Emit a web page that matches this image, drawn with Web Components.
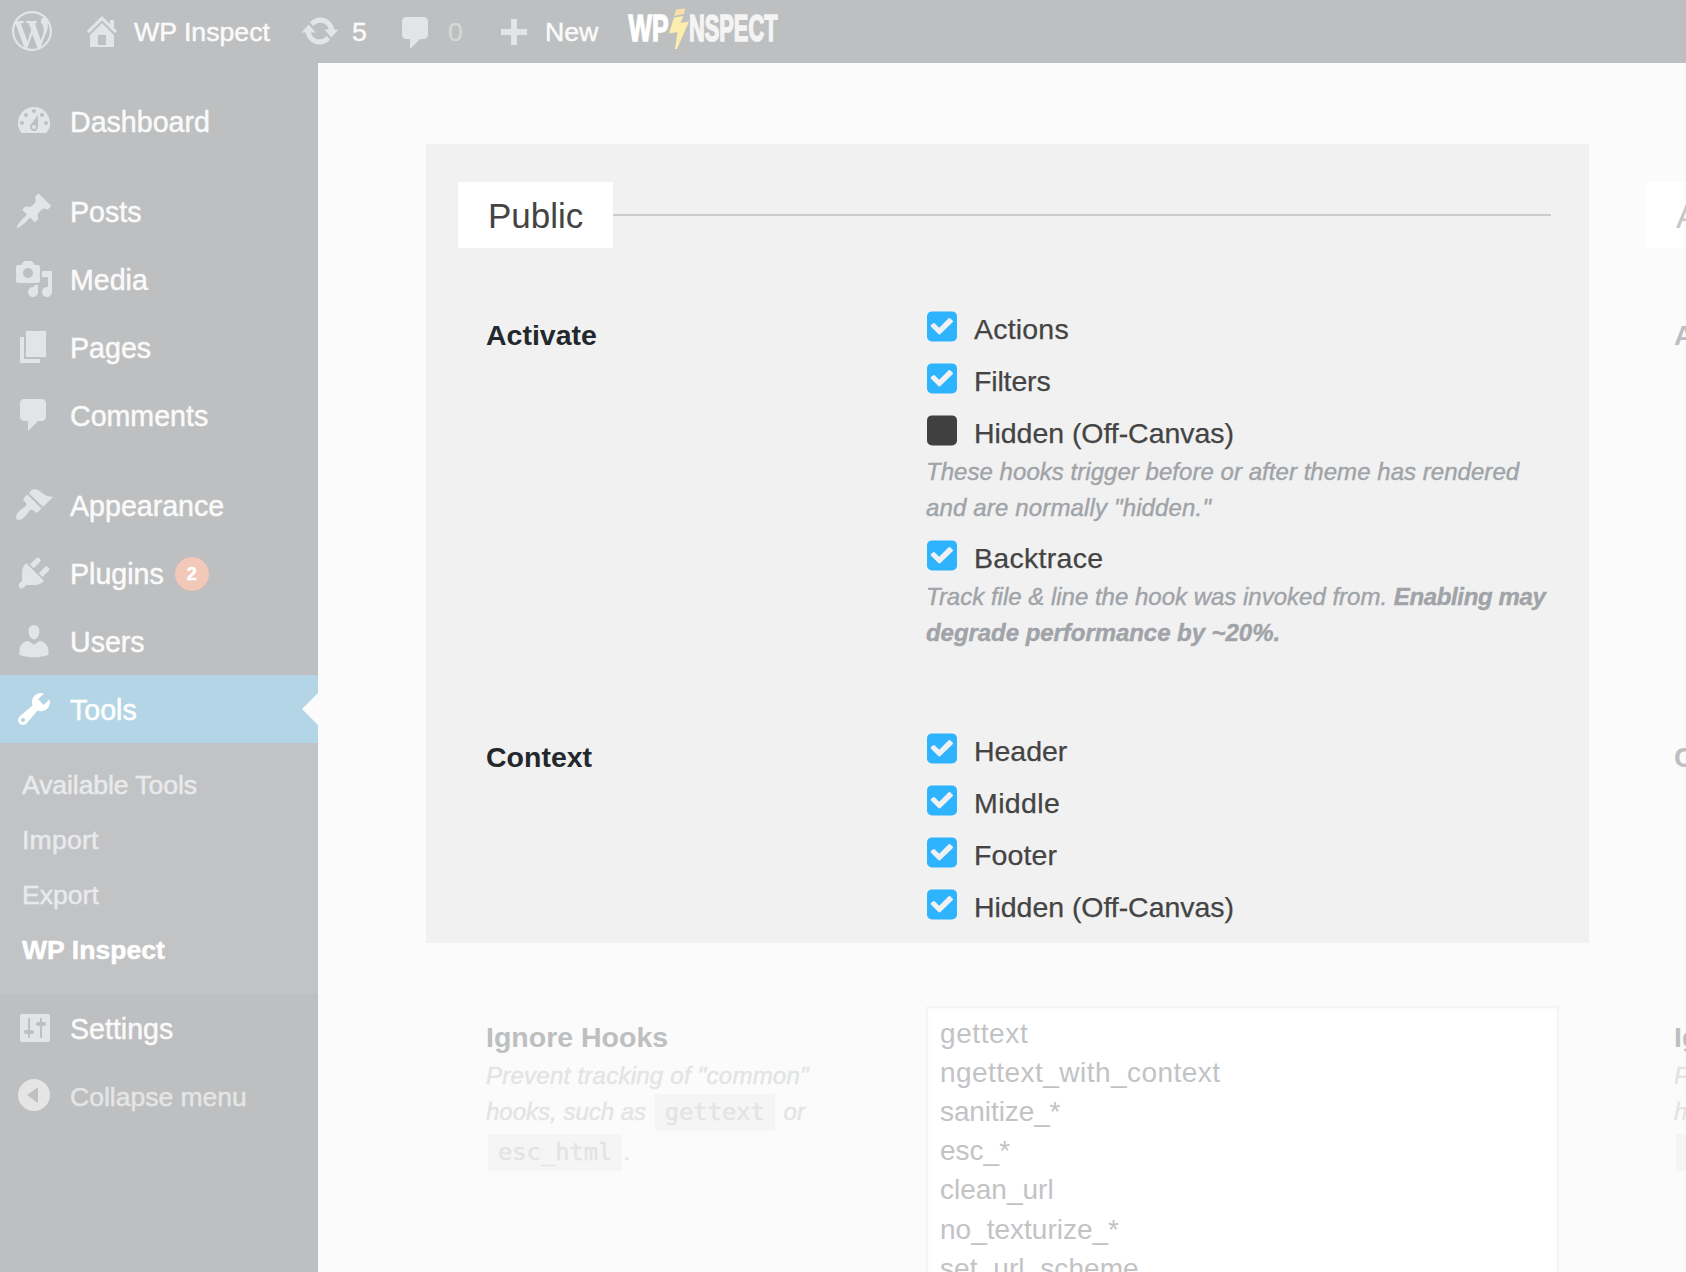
<!DOCTYPE html>
<html lang="en">
<head>
<meta charset="utf-8">
<title>WP Inspect</title>
<style>
html,body{margin:0;height:100%;overflow:hidden}
body{font-family:"Liberation Sans",Arial,sans-serif;background:#fbfbfb}
</style>
</head>
<body>
<wp-page>
  <wp-bar slot="bar"></wp-bar>
  <wp-menu slot="menu"></wp-menu>
  <wp-section slot="main" name="Public" active>
    <wp-field label="Activate" slot="fields">
      <wp-check checked style="--ls:.2px">Actions</wp-check>
      <wp-check checked style="--ls:-.15px">Filters</wp-check>
      <wp-check style="--ls:-.05px">Hidden (Off-Canvas)</wp-check>
      <wp-help><span style="letter-spacing:.04px">These hooks trigger before or after theme has rendered</span><br><span style="letter-spacing:.15px">and are normally "hidden."</span></wp-help>
      <wp-check checked style="--ls:.3px">Backtrace</wp-check>
      <wp-help>Track file &amp; line the hook was invoked from. <b style="letter-spacing:-.35px">Enabling may</b><br><b style="letter-spacing:-.05px">degrade performance by ~20%.</b></wp-help>
    </wp-field>
    <wp-field label="Context" slot="fields">
      <wp-check checked style="--ls:-.05px">Header</wp-check>
      <wp-check checked style="--ls:.4px">Middle</wp-check>
      <wp-check checked style="--ls:.1px">Footer</wp-check>
      <wp-check checked style="--ls:-.05px">Hidden (Off-Canvas)</wp-check>
    </wp-field>
    <wp-ignore slot="rest"></wp-ignore>
  </wp-section>
  <wp-section slot="main" name="Admin">
    <wp-field label="Activate" slot="fields"></wp-field>
    <wp-field label="Context" slot="fields"></wp-field>
    <wp-ignore slot="rest"></wp-ignore>
  </wp-section>
</wp-page>
<script>
const ICONS = {
  wordpress:'M20 10c0-5.51-4.49-10-10-10C4.48 0 0 4.49 0 10c0 5.52 4.48 10 10 10 5.51 0 10-4.48 10-10zM7.78 15.37L4.37 6.22c.55-.02 1.17-.08 1.17-.08.5-.06.44-1.13-.06-1.11 0 0-1.45.11-2.37.11-.18 0-.37 0-.58-.01C4.12 2.69 6.87 1.11 10 1.11c2.33 0 4.45.87 6.05 2.34-.68-.11-1.65.39-1.65 1.58 0 .74.45 1.36.9 2.1.35.61.55 1.36.55 2.46 0 1.49-1.4 5-1.4 5l-3.03-8.37c.54-.02.82-.17.82-.17.5-.05.44-1.25-.06-1.22 0 0-1.44.12-2.38.12-.87 0-2.33-.12-2.33-.12-.5-.03-.56 1.2-.06 1.22l.92.08 1.26 3.41zM17.41 10c.24-.64.74-1.87.43-4.25.7 1.29 1.05 2.71 1.05 4.25 0 3.29-1.73 6.24-4.4 7.78.97-2.59 1.94-5.2 2.92-7.78zM6.1 18.09C3.12 16.65 1.11 13.53 1.11 10c0-1.3.23-2.48.72-3.59C3.25 10.3 4.67 14.2 6.1 18.09zm4.03-6.63l2.58 6.98c-.86.29-1.76.45-2.71.45-.79 0-1.57-.11-2.29-.33.81-2.38 1.62-4.74 2.42-7.1z',
  home:'M16 8.5l1.53 1.53-1.06 1.06L10 4.6l-6.47 6.49-1.06-1.06L10 2.5l4 4v-2h2v4zm-6-2.46l6 5.99V18H4v-5.97zM12 17v-5H8v5h4z',
  update:'M10.2 3.28c3.53 0 6.43 2.61 6.92 6h2.08l-3.5 4-3.5-4h2.32c-.45-1.97-2.21-3.45-4.32-3.45-1.45 0-2.73.71-3.54 1.78L4.95 5.66C6.23 4.2 8.11 3.28 10.2 3.28zm-.4 13.44c-3.52 0-6.43-2.61-6.92-6H.8l3.5-4c1.17 1.33 2.33 2.67 3.5 4H5.48c.45 1.97 2.21 3.45 4.32 3.45 1.45 0 2.73-.71 3.54-1.78l1.71 1.95c-1.28 1.46-3.15 2.38-5.25 2.38z',
  plus:'M8.5 4h3v5H16.5v3h-5v5h-3v-5h-5V9h5z',
  dashboard:'M3.76 16h12.48A7.998 7.998 0 0010 3a7.998 7.998 0 00-6.24 13zM10 4c.55 0 1 .45 1 1s-.45 1-1 1-1-.45-1-1 .45-1 1-1zM6 6c.55 0 1 .45 1 1s-.45 1-1 1-1-.45-1-1 .45-1 1-1zm8 0c.55 0 1 .45 1 1s-.45 1-1 1-1-.45-1-1 .45-1 1-1zm-5.37 5.55L12 7v6c0 1.1-.9 2-2 2s-2-.9-2-2c0-.57.24-1.08.63-1.45zM4 10c.55 0 1 .45 1 1s-.45 1-1 1-1-.45-1-1 .45-1 1-1zm12 0c.55 0 1 .45 1 1s-.45 1-1 1-1-.45-1-1 .45-1 1-1zm-5 3c0-.55-.45-1-1-1s-1 .45-1 1 .45 1 1 1 1-.45 1-1z',
  post:'M10.44 3.02l1.82-1.82 6.36 6.35-1.83 1.82c-1.05-.68-2.48-.57-3.41.36l-.75.75c-.92.93-1.04 2.35-.35 3.41l-1.83 1.82-2.41-2.41-2.8 2.79c-.42.42-3.38 2.71-3.8 2.29s1.86-3.39 2.28-3.81l2.79-2.79L4.1 9.36l1.83-1.82c1.05.69 2.48.57 3.4-.36l.75-.75c.93-.92 1.05-2.35.36-3.41z',
  media:'M13 11V4c0-.55-.45-1-1-1h-1.67L9 1H5L3.67 3H2c-.55 0-1 .45-1 1v7c0 .55.45 1 1 1h10c.55 0 1-.45 1-1zM7 4.5c1.38 0 2.5 1.12 2.5 2.5S8.38 9.5 7 9.5 4.5 8.38 4.5 7 5.62 4.5 7 4.5zM14 6h5v10.5c0 1.38-1.12 2.5-2.5 2.5S14 17.88 14 16.5s1.12-2.5 2.5-2.5c.17 0 .34.02.5.05V9h-3V6zm-4 8.05V13h2v3.5c0 1.38-1.12 2.5-2.5 2.5S7 17.88 7 16.5 8.12 14 9.5 14c.17 0 .34.02.5.05z',
  page:'M6 15V2h10v13H6zm-1 1h8v2H3V5h2v11z',
  comment:'M5 2h9c1.1 0 2 .9 2 2v7c0 1.1-.9 2-2 2h-2l-5 5v-5H5c-1.1 0-2-.9-2-2V4c0-1.1.9-2 2-2z',
  brush:'M14.48 11.06L7.41 3.99l1.5-1.5c.5-.56 2.3-.47 3.51.32 1.21.8 1.43 1.28 2.91 2.1 1.18.64 2.45 1.26 4.45.85zm-.71.71L6.7 4.7 4.93 6.47c-.39.39-.39 1.02 0 1.41l1.06 1.06c.39.39.39 1.03 0 1.42-.6.6-1.43 1.11-2.21 1.69-.35.26-.7.53-1.01.84C1.43 14.23.4 16.08 1.4 17.07c.99 1 2.84-.03 4.18-1.36.31-.31.58-.66.85-1.02.57-.78 1.08-1.61 1.69-2.21.39-.39 1.02-.39 1.41 0l1.06 1.06c.39.39 1.02.39 1.41 0z',
  plug:'M13.11 4.36L9.87 7.6 8 5.73l3.24-3.24c.35-.34 1.05-.2 1.56.32.52.51.66 1.21.31 1.55zm-8 1.77l.91-1.12 9.01 9.01-1.19.84c-.71.71-2.63 1.16-3.82 1.16H6.14L4.9 17.26c-.59.59-1.54.59-2.12 0-.59-.58-.59-1.53 0-2.12l1.24-1.24v-3.88c0-1.13.4-3.19 1.09-3.89zm7.26 3.97l3.24-3.24c.34-.35 1.04-.21 1.55.31.52.51.66 1.21.31 1.55l-3.24 3.25z',
  user:'M10 9.25c-2.27 0-2.73-3.44-2.73-3.44C7 4.02 7.82 2 9.97 2c2.16 0 2.98 2.02 2.71 3.81 0 0-.41 3.44-2.68 3.44zm0 2.57L12.72 10c2.39 0 4.52 2.33 4.52 4.53v2.49s-3.65 1.13-7.24 1.13c-3.65 0-7.24-1.13-7.24-1.13v-2.49c0-2.25 1.94-4.48 4.47-4.48z',
  wrench:'M16.68 9.77c-1.34 1.34-3.3 1.67-4.95.99l-5.41 6.52c-.99.99-2.59.99-3.58 0s-.99-2.59 0-3.57l6.52-5.42c-.68-1.65-.35-3.61.99-4.95 1.28-1.28 3.12-1.62 4.72-1.06l-2.89 2.89 2.82 2.82 2.86-2.87c.53 1.58.18 3.39-1.08 4.65zM3.81 16.21c.4.39 1.04.39 1.43 0 .4-.4.4-1.04 0-1.43-.39-.4-1.03-.4-1.43 0-.39.39-.39 1.03 0 1.43z',
  settings:'M18 16V4c0-.55-.45-1-1-1H4c-.55 0-1 .45-1 1v12c0 .55.45 1 1 1h13c.55 0 1-.45 1-1zM8 11h1c.55 0 1 .45 1 1s-.45 1-1 1H8v1.5c0 .28-.22.5-.5.5s-.5-.22-.5-.5V13H6c-.55 0-1-.45-1-1s.45-1 1-1h1V5.5c0-.28.22-.5.5-.5s.5.22.5.5V11zm5-2h-1c-.55 0-1-.45-1-1s.45-1 1-1h1V5.5c0-.28.22-.5.5-.5s.5.22.5.5V7h1c.55 0 1 .45 1 1s-.45 1-1 1h-1v5.5c0 .28-.22.5-.5.5s-.5-.22-.5-.5V9z',
  collapse:'M10 2a8 8 0 100 16 8 8 0 000-16zM12 6.1V14L6.5 10.05z'
};
const define = (name, html) => customElements.define(name, class extends HTMLElement {
  connectedCallback() {
    if (this.shadowRoot) return;
    this.attachShadow({mode: 'open'}).innerHTML = typeof html === 'function' ? html(this) : html;
  }
});

define('wp-icon', el => `<style>:host{display:block;width:40px;height:40px;flex:none;color:#e2e4e5}svg{display:block}</style>
<svg width="40" height="40" viewBox="0 0 20 20"><path fill="currentColor" fill-rule="evenodd" d="${ICONS[el.getAttribute('name')]}"/></svg>`);

define('wp-page', `<style>
:host{display:flex;flex-direction:column;width:1686px;height:1272px;overflow:hidden}
.row{display:flex;flex:1;min-height:0}
main{flex:1;min-width:0;overflow:hidden;display:flex;gap:25px;padding:81px 0 0 108px;background:#fbfbfb}
</style><slot name="bar"></slot><div class="row"><slot name="menu"></slot><main><slot name="main"></slot></main></div>`);

define('wp-bar', `<style>
:host{display:flex;height:63px;flex:none;background:#bdbfc0;color:#fafafa;font-size:26.7px;line-height:64px;-webkit-text-stroke:.5px currentColor;white-space:nowrap}
wp-icon{margin-top:11px}
.i{display:flex}
.i.wp{width:70px;padding-left:12px}
.i.home{width:218px}
.home span{margin-left:12px}
.i.up{width:96px}.up span{margin-left:12px}
.i.cm{width:98px}.cm span{margin-left:12px;color:#d6d7d7}
.cm wp-icon{margin-top:13px}
.i.new{width:134px}.new span{margin-left:11px}
svg{display:block;overflow:visible}
text{font-family:"Liberation Sans",Arial,sans-serif;font-weight:bold;font-size:37px;-webkit-text-stroke:0}
.w{fill:#fff;stroke:#fff;stroke-width:1.5px}
.n{fill:#f4f4f4;stroke:#f4f4f4;stroke-width:1.7px}
</style>
<div class="i wp"><wp-icon name="wordpress"></wp-icon></div>
<div class="i home"><wp-icon name="home"></wp-icon><span>WP Inspect</span></div>
<div class="i up"><wp-icon name="update"></wp-icon><span>5</span></div>
<div class="i cm"><wp-icon name="comment"></wp-icon><span>0</span></div>
<div class="i new"><wp-icon name="plus"></wp-icon><span>New</span></div>
<svg width="152" height="63" viewBox="628 0 152 63">
<text class="w" x="628.500" y="41.200" textLength="40" lengthAdjust="spacingAndGlyphs">WP</text>
<text class="n" x="689" y="41.200" textLength="88.500" lengthAdjust="spacingAndGlyphs">NSPECT</text>
<path stroke="none" fill="#fbdfa8" d="M676 9.500l9-1-1 5.500-10 2z"/><path stroke="none" fill="#fdedac" d="M674 17.500l9.500-1.500-3 7 8.500-1.500-12 27.500h-2l2.500-17-8.500 1.500z"/>
</svg>`);

define('wp-row', el => `<style>
:host{display:flex;height:68px;padding-left:14px;color:#fafafa;font-size:28.6px;line-height:70px;white-space:nowrap;-webkit-text-stroke:.5px currentColor}
wp-icon{margin:14px 16px 0 0}
:host([current]){background:#b3d5e6;color:#fff;position:relative}
:host([current]) wp-icon{color:#fff}
:host([current])::after{content:"";position:absolute;right:0;top:18px;border:16px solid transparent;border-left:0;border-right-color:#fbfbfb}
:host([muted]){color:#e5e5e5;font-size:26.5px}
:host([muted]) wp-icon{margin-top:13px;color:#e5e5e5}
.b{margin:18px 0 0 11px;width:34px;height:34px;border-radius:50%;background:#f2c8b8;color:#fff;font:bold 18px/35px "Liberation Sans",Arial,sans-serif;text-align:center}
</style><wp-icon name="${el.getAttribute('icon')}"></wp-icon><span><slot></slot></span>${el.hasAttribute('badge') ? `<span class="b">${el.getAttribute('badge')}</span>` : ''}`);

/* Menu rows: icon, label and an optional badge; 0 stands for a separator. */
const rows = [['dashboard','Dashboard'],0,['post','Posts'],['media','Media'],['page','Pages'],['comment','Comments'],0,
  ['brush','Appearance'],['plug','Plugins',2],['user','Users'],['wrench','Tools']];
define('wp-menu', `<style>
:host{display:flex;flex-direction:column;width:318px;flex:none;padding-top:24px;box-sizing:border-box;background:#bdbfc0}
.gap{height:22px}
.sub{height:251px;box-sizing:border-box;padding:15px 0 0 22px;background:#c2c3c5;color:#e9eaec;font-size:26.6px;line-height:55px;-webkit-text-stroke:.5px currentColor}
.sub b{display:block;color:#fff}.sub div{height:55px}
</style>
${rows.map(r => r ? `<wp-row icon="${r[0]}"${r[2] ? ` badge="${r[2]}"` : ''}${r[1] === 'Tools' ? ' current' : ''}>${r[1]}</wp-row>` : '<div class="gap"></div>').join('')}
<div class="sub"><div style="letter-spacing:-.1px">Available Tools</div><div style="letter-spacing:.2px">Import</div><div>Export</div><b>WP Inspect</b></div>
<wp-row icon="settings">Settings</wp-row><wp-row icon="collapse" muted>Collapse menu</wp-row>`);

define('wp-section', el => `<style>
:host{display:block;width:1163px;flex:none;--th:#bdbfc0;--title:#c7c7c7}
:host([active]){--th:#23282d;--title:#444}
.panel{height:799px;box-sizing:border-box;padding:38px 38px 0 32px}
:host([active]) .panel{background:#f1f1f1}
header{display:flex;align-items:center;height:66px;margin-bottom:55px}
h2{margin:0;width:155px;height:66px;box-sizing:border-box;padding-left:30px;background:#fff;color:var(--title);font-weight:normal;font-size:35px;line-height:68px}
i{flex:1;height:2px;background:#ccc}
:host(:not([active])) i{background:#f0f0f0}
</style>
<div class="panel"><header><h2>${el.getAttribute('name')}</h2><i></i></header><slot name="fields"></slot></div>
<slot name="rest"></slot>`);

define('wp-field', el => `<style>
:host{display:flex;height:422px;padding-left:28px}
.th{width:441px;flex:none;color:var(--th);font-weight:bold;font-size:28.5px;line-height:36px;padding-top:14px;box-sizing:border-box}
.td{flex:1;min-width:0}
</style><div class="th">${el.getAttribute('label')}</div><div class="td"><slot></slot></div>`);

define('wp-check', el => `<style>
:host{display:flex;height:52px;color:#444;font-size:28.5px;line-height:52px;white-space:nowrap;letter-spacing:var(--ls,0);-webkit-text-stroke:.25px currentColor}
svg{display:block;margin:8px 16px 0 0;flex:none}
</style><svg width="31" height="31" viewBox="0 0 31 31"><rect y=".4" width="30" height="30" rx="5" fill="${el.hasAttribute('checked') ? '#2eb4ff' : '#404040'}"/>
${el.hasAttribute('checked') ? '<path d="M5 14.800L7 13.300l5.200 5.400L22.300 8.300l2.400 2.100L12.300 22.200z" fill="#f1f1f1" stroke="#f1f1f1" stroke-width="2.600" stroke-linejoin="round"/>' : ''}</svg><span><slot></slot></span>`);

define('wp-help', `<style>
:host{display:block;margin:-5px 0 6px -1px;color:#a0a3a7;font-style:italic;font-size:24px;line-height:36px;white-space:nowrap;-webkit-text-stroke:.4px currentColor}
</style><slot></slot>`);

define('wp-ignore', `<style>
:host{display:flex;padding:63px 0 0 60px}
.l{width:440px;flex:none;white-space:nowrap}
h3{margin:12.500px 0 0;font-size:28.5px;line-height:36px;color:#bdbfc0;font-weight:bold}
.h{color:#e2e4e5;font-style:italic;font-size:24px;line-height:36px;margin:3px 0 0;-webkit-text-stroke:.4px currentColor}
.h div{height:36px}.h .last{margin-top:4px}
code{display:inline-block;font:normal 23.75px/37px "DejaVu Sans Mono",monospace;background:#f5f5f5;padding:0 10px;margin:0 2px}
.area{width:633px;height:400px;box-sizing:border-box;border:2px solid #f5f5f5;background:#fff;box-shadow:inset 0 2px 4px rgba(0,0,0,.02);padding:5.500px 12px;font-size:28px;line-height:39.2px;color:#c2c3c5}
</style>
<div class="l"><h3>Ignore Hooks</h3><div class="h"><div style="letter-spacing:.25px">Prevent tracking of "common"</div><div>hooks, such as <code>gettext</code> or</div><div class="last"><code>esc_html</code>.</div></div></div>
<div class="area"><span style="letter-spacing:.6px">gettext</span><br><span style="letter-spacing:.46px">ngettext_with_context</span><br><span style="letter-spacing:-.1px">sanitize_*</span><br>esc_*<br>clean_url<br>no_texturize_*<br><span style="letter-spacing:.08px">set_url_scheme</span></div>`);
</script>
</body>
</html>
